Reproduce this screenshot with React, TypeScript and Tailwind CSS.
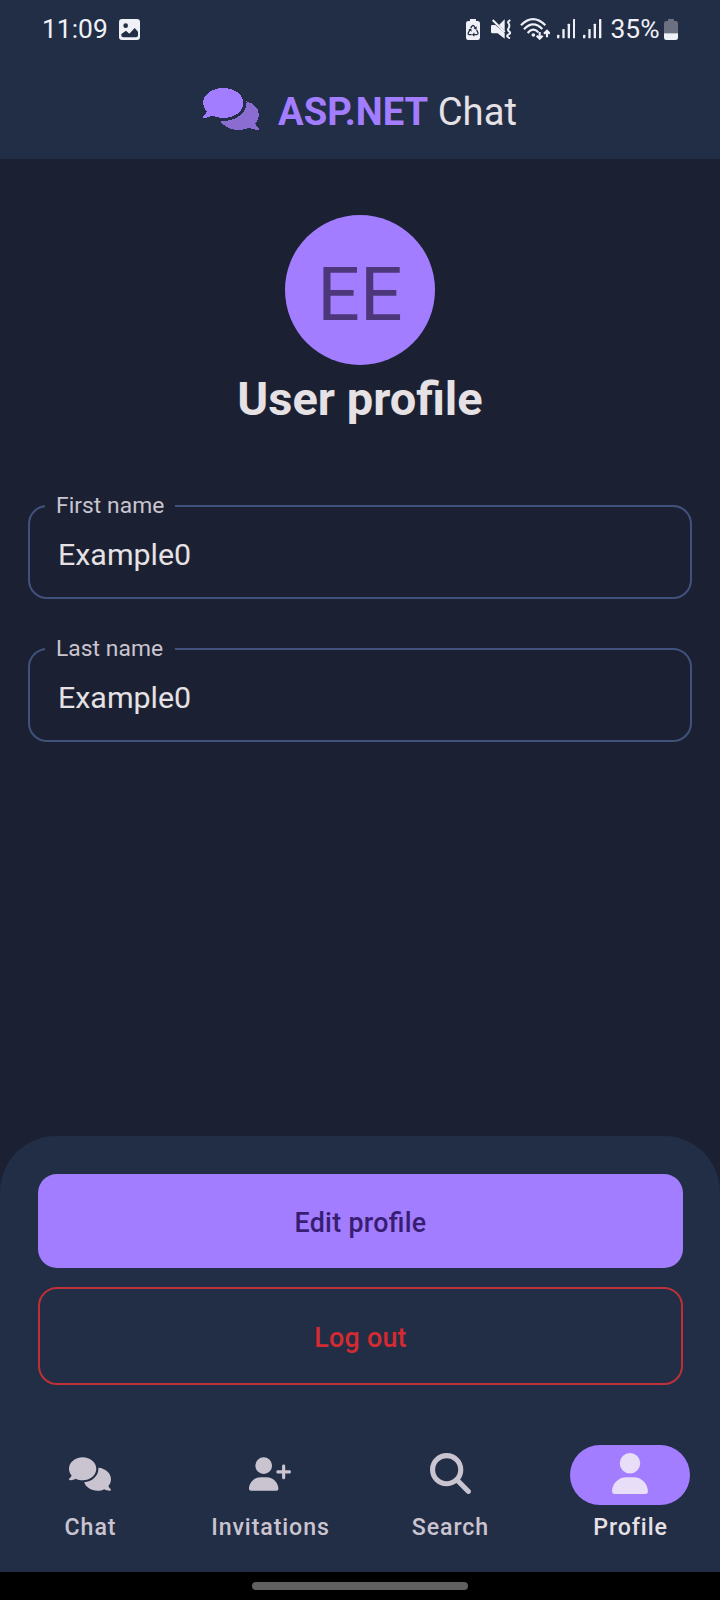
import React from "react";
import { FaComments, FaUserPlus, FaMagnifyingGlass, FaUser } from "react-icons/fa6";

function PictureIcon() {
  return (
    <svg viewBox="0 0 63 63" className="ml-[11px] h-[21px] w-[21px]">
      <path
        fillRule="evenodd"
        fill="#eff1f7"
        d="M9 0h45a9 9 0 0 1 9 9v45a9 9 0 0 1-9 9H9a9 9 0 0 1-9-9V9a9 9 0 0 1 9-9ZM20 13a7 7 0 1 0 0 14a7 7 0 0 0 0-14ZM7 49q0 6 6 6h38q6 0 6-6V38l-10-11L31 44l-10-9L7 45Z"
      />
    </svg>
  );
}

function RecycleBattery() {
  return (
    <svg viewBox="0 0 42 63" className="h-[21px] w-[14px]">
      <path fill="#eff1f7" d="M12 0h18v6h5q7 0 7 7v43q0 7-7 7H7q-7 0-7-7V13q0-7 7-7h5Z" />
      <g fill="none" stroke="#222e46" strokeWidth="4">
        <path d="M14 27l5-7q2-2 4 0l6 8" />
        <path d="M32 33l4 8q1 5-4 6h-9" />
        <path d="M17 47h-7q-5-1-3-6l5-9" />
      </g>
      <path fill="#222e46" d="M32 22v10l-9-3ZM25 40v13l-7-6ZM7 31l9-2l1 9Z" />
    </svg>
  );
}

function MuteIcon() {
  return (
    <svg viewBox="0 0 62 60" className="ml-[10.5px] h-[20px] w-[20.7px]">
      <path fill="#eff1f7" d="M3 18h10l28 24v17L20 43H4Q0 43 0 39V21Q0 18 3 18ZM41 1v34L24 18Z" />
      <path fill="none" stroke="#eff1f7" strokeWidth="6" d="M5 3l36 36" />
      <path
        fill="none"
        stroke="#eff1f7"
        strokeWidth="6"
        d="M58 3q-9 5-6 9t3 8t-3 9t3 9t-3 9t5 11"
      />
    </svg>
  );
}

function WifiIcon() {
  return (
    <svg viewBox="0 0 90 66" className="ml-[8.5px] h-[22px] w-[30px]">
      <g fill="none" stroke="#eff1f7" strokeWidth="6.5">
        <path d="M3 22Q39-15 76 22" />
        <path d="M12 34Q39 5 67 33" />
        <path d="M23 45Q39 26 55 43" />
        <path d="M59 42v19M50 53l9 9l9-9M81 58V39M72 47l9-9l9 9" />
      </g>
      <circle cx="40" cy="51" r="5.5" fill="#eff1f7" />
    </svg>
  );
}

function SignalIcon({ className }: { className: string }) {
  return (
    <svg viewBox="0 0 56 60" className={"h-[20px] w-[18.7px] " + className}>
      <g fill="#eff1f7">
        <rect x="0" y="47" width="7" height="11" rx="2" />
        <rect x="16" y="30" width="7" height="28" rx="2" />
        <rect x="32" y="14" width="7" height="44" rx="2" />
        <rect x="48" y="0" width="7" height="58" rx="2" />
      </g>
    </svg>
  );
}

function BatteryIcon() {
  return (
    <svg viewBox="0 0 42 63" className="ml-[4.5px] h-[21px] w-[14px]">
      <path fill="#6b7183" d="M12 0h18v6h5q7 0 7 7v30H0V13q0-7 7-7h5Z" />
      <path fill="#eff1f7" d="M0 43h42v13q0 7-7 7H7q-7 0-7-7Z" />
    </svg>
  );
}

function Logo() {
  return (
    <svg
      viewBox="0 32 576 448"
      preserveAspectRatio="none"
      shapeRendering="crispEdges"
      className="h-[42px] w-[56px]"
      fill="#a37dff"
    >
      <path d="M416 192c0-88.4-93.1-160-208-160S0 103.6 0 192c0 34.3 14.1 65.9 38 92-13.4 30.2-35.5 54.2-35.8 54.5-2.2 2.3-2.8 5.7-1.5 8.7S4.8 352 8 352c36.6 0 66.9-12.3 88.7-25 32.2 15.7 70.3 25 111.3 25 114.9 0 208-71.6 208-160z" />
      <path
        fill="#8b6dd2"
        d="M538 412c23.9-26 38-57.7 38-92 0-66.9-53.5-124.2-129.3-148.1.9 6.6 1.3 13.3 1.3 20.1 0 105.9-107.7 192-240 192-10.8 0-21.3-.8-31.7-1.9C207.8 439.6 281.8 480 368 480c41 0 79.1-9.2 111.3-25 21.8 12.7 52.1 25 88.7 25 3.2 0 6.1-1.9 7.3-4.8 1.3-2.9.7-6.3-1.5-8.7-.3-.3-22.4-24.2-35.8-54.5z"
      />
    </svg>
  );
}

function Field({ label, value }: { label: string; value: string }) {
  return (
    <fieldset className="mx-[28px] h-[107px] rounded-[19px] border-2 border-[#40527b] pl-[28px]">
      <legend className="-ml-[13px] h-[28px] w-[130px] pl-[11px] text-[22.8px] leading-[28px] tracking-[0.05px] whitespace-nowrap text-[#cac4d0]">
        {label}
      </legend>
      <div className="mt-[15px] text-[30.4px] leading-[40px] text-[#e6e1e5]">{value}</div>
    </fieldset>
  );
}

function NavItem({ label, active, children }: { label: string; active?: boolean; children: React.ReactNode }) {
  return (
    <div className="flex w-[180px] flex-col items-center">
      <div
        className={
          "flex h-[60px] w-[120px] items-center justify-center rounded-full pb-[3px] " +
          (active ? "bg-[#a37dff] text-[#e8def8]" : "text-[#cac4d0]")
        }
      >
        {children}
      </div>
      <div
        className={
          "mt-[7px] pl-[1px] text-[23.2px] leading-[30px] font-medium tracking-[0.9px] [font-variant-ligatures:none] " +
          (active ? "text-[#e6e1e5]" : "text-[#cac4d0]")
        }
      >
        {label}
      </div>
    </div>
  );
}

export default function App() {
  return (
    <div className="flex h-[1600px] w-[720px] flex-col overflow-hidden bg-[#1b2132] font-['Roboto',sans-serif]">
      <header className="h-[159px] bg-[#222e46]">
        <div className="flex h-[58px] items-center justify-between pr-[42px] pl-[42px] text-[26.4px] text-[#eff1f7]">
          <div className="flex items-center">
            <span className="leading-[30px]">11:09</span>
            <PictureIcon />
          </div>
          <div className="flex items-center">
            <RecycleBattery />
            <MuteIcon />
            <WifiIcon />
            <SignalIcon className="ml-[6.5px]" />
            <SignalIcon className="ml-[8px]" />
            <span className="ml-[8.5px] leading-[30px]">35%</span>
            <BatteryIcon />
          </div>
        </div>
        <div className="flex h-[101px] items-center pl-[203px]">
          <Logo />
          <h1 className="mt-[6px] ml-[19px] text-[38.2px] leading-[44px] whitespace-nowrap text-[#e6e1e5]">
            <span className="font-bold text-[#a37dff]">ASP.NET</span> Chat
          </h1>
        </div>
      </header>

      <main className="flex flex-1 flex-col">
        <div className="mt-[56px] flex h-[150px] w-[150px] items-center justify-center self-center rounded-full bg-[#a37dff] pt-[8px] text-[75px] leading-[88px] text-[#4b3779]">
          EE
        </div>
        <h2 className="mt-[4px] text-center text-[47px] leading-[60px] font-bold text-[#e6e1e5]">User profile</h2>
        <div className="mt-[63px] flex flex-col gap-[36px]">
          <Field label="First name" value="Example0" />
          <Field label="Last name" value="Example0" />
        </div>
      </main>

      <section className="h-[436px] rounded-t-[56px] bg-[#222e46] pt-[38px]">
        <div className="mr-[37px] ml-[38px] flex flex-col gap-[19px]">
          <button className="h-[94px] rounded-[19px] bg-[#a37dff] pt-[5px] text-[26.8px] font-medium tracking-[0.3px] text-[#381e72] [font-feature-settings:'liga'_1]">
            Edit profile
          </button>
          <button className="h-[98px] rounded-[19px] border-2 border-[#bd3038] pt-[5px] text-[26.8px] font-medium tracking-[0.3px] text-[#d32b31]">
            Log out
          </button>
        </div>
        <nav className="mt-[60px] flex">
          <NavItem label="Chat">
            <FaComments className="h-[34px] w-[42px]" />
          </NavItem>
          <NavItem label="Invitations">
            <FaUserPlus className="h-[34px] w-[42px]" />
          </NavItem>
          <NavItem label="Search">
            <FaMagnifyingGlass className="h-[41px] w-[41px]" />
          </NavItem>
          <NavItem label="Profile" active>
            <FaUser className="h-[41px] w-[36px]" />
          </NavItem>
        </nav>
      </section>
      <footer className="flex h-[28px] justify-center bg-black pt-[10px]">
        <div className="h-[8px] w-[216px] rounded-full bg-[#606060]" />
      </footer>
    </div>
  );
}
